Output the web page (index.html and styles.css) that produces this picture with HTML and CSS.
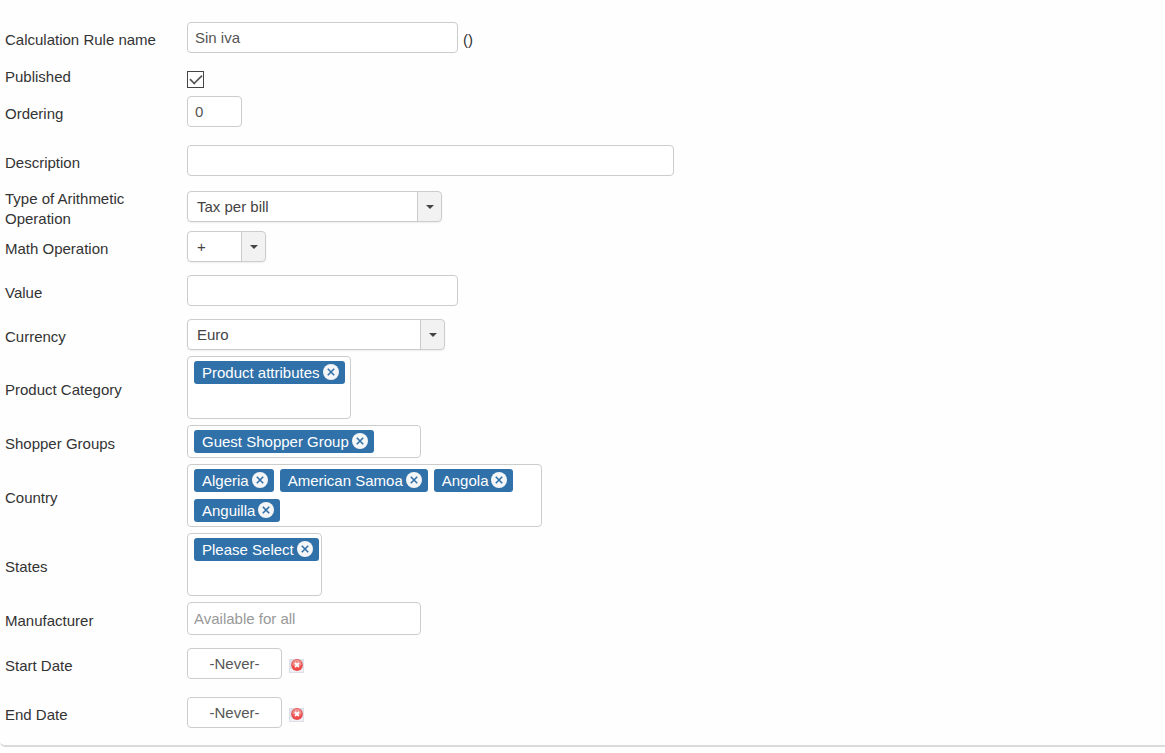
FILE: index.html
```html
<!DOCTYPE html>
<html lang="en">
<head>
<meta charset="utf-8">
<title>Calculation Rule</title>
<link rel="stylesheet" href="styles.css">
</head>
<body>
<svg class="defs" aria-hidden="true">
  <symbol id="remove" viewBox="0 0 16 16"><circle cx="8" cy="8" r="8" fill="#f4f5f7"/><path d="M4.8 4.8l6.4 6.4M11.2 4.8l-6.4 6.4" stroke="#3071a9" stroke-width="1.6"/></symbol>
  <symbol id="clear" viewBox="0 0 15 14">
    <path d="M0 0h15v14H0z" fill="#dfe0e8"/><path d="M1 10h13v3H1z" fill="#f0f0f4"/>
    <circle cx="8" cy="6" r="5.9" fill="#e25555"/><circle cx="8" cy="5.2" r="4.5" fill="#f29090"/><path d="M3.2 6.5a4.8 4.8 0 0 0 9.6 0z" fill="#f04a4a"/>
    <path d="M6 4l4 4M10 4l-4 4" stroke="#fff" stroke-width="1.8"/>
  </symbol>
</svg>
<form class="panel">
  <div class="row">
    <label class="label" for="name">Calculation Rule name</label>
    <div class="field"><input class="input medium" id="name" type="text" value="Sin iva"><span class="note">()</span></div>
  </div>
  <div class="row gap-lg check-row">
    <label class="label" for="published">Published</label>
    <div class="field"><input class="check" id="published" type="checkbox" checked></div>
  </div>
  <div class="row">
    <label class="label" for="ordering">Ordering</label>
    <div class="field"><input class="input tiny" id="ordering" type="text" value="0"></div>
  </div>
  <div class="row gap-lg">
    <label class="label" for="description">Description</label>
    <div class="field"><input class="input large" id="description" type="text"></div>
  </div>
  <div class="row gap-md tall">
    <label class="label" for="kind">Type of Arithmetic Operation</label>
    <div class="field"><span class="select kind"><select id="kind"><option>Tax per bill</option></select></span></div>
  </div>
  <div class="row gap-xs">
    <label class="label" for="math">Math Operation</label>
    <div class="field"><span class="select math"><select id="math"><option>+</option></select></span></div>
  </div>
  <div class="row gap-md">
    <label class="label" for="value">Value</label>
    <div class="field"><input class="input medium" id="value" type="text"></div>
  </div>
  <div class="row gap-md">
    <label class="label" for="currency">Currency</label>
    <div class="field"><span class="select currency"><select id="currency"><option>Euro</option></select></span></div>
  </div>
  <div class="row gap-sm">
    <span class="label" id="l-category">Product Category</span>
    <div class="chips category" role="group" aria-labelledby="l-category">
      <span class="chip">Product attributes<button type="button" aria-label="Remove"><svg><use href="#remove"/></svg></button></span>
    </div>
  </div>
  <div class="row gap-sm">
    <span class="label" id="l-groups">Shopper Groups</span>
    <div class="chips single" role="group" aria-labelledby="l-groups">
      <span class="chip">Guest Shopper Group<button type="button" aria-label="Remove"><svg><use href="#remove"/></svg></button></span>
    </div>
  </div>
  <div class="row gap-sm">
    <span class="label" id="l-country">Country</span>
    <div class="chips country" role="group" aria-labelledby="l-country">
      <span class="chip">Algeria<button type="button" aria-label="Remove"><svg><use href="#remove"/></svg></button></span>
      <span class="chip">American Samoa<button type="button" aria-label="Remove"><svg><use href="#remove"/></svg></button></span>
      <span class="chip">Angola<button type="button" aria-label="Remove"><svg><use href="#remove"/></svg></button></span>
      <span class="chip">Anguilla<button type="button" aria-label="Remove"><svg><use href="#remove"/></svg></button></span>
    </div>
  </div>
  <div class="row gap-sm">
    <span class="label" id="l-states">States</span>
    <div class="chips states" role="group" aria-labelledby="l-states">
      <span class="chip">Please Select<button type="button" aria-label="Remove"><svg><use href="#remove"/></svg></button></span>
    </div>
  </div>
  <div class="row gap-sm">
    <label class="label" for="manufacturer">Manufacturer</label>
    <div class="field"><input class="input maker" id="manufacturer" type="text" placeholder="Available for all"></div>
  </div>
  <div class="row gap-md">
    <label class="label" for="start">Start Date</label>
    <div class="field"><input class="input date" id="start" type="text" value="-Never-"><button class="clear" type="button" aria-label="Clear start date"><svg><use href="#clear"/></svg></button></div>
  </div>
  <div class="row gap-lg">
    <label class="label" for="end">End Date</label>
    <div class="field"><input class="input date" id="end" type="text" value="-Never-"><button class="clear" type="button" aria-label="Clear end date"><svg><use href="#clear"/></svg></button></div>
  </div>
</form>
</body>
</html>
```
FILE: styles.css
```css
* { box-sizing: border-box; }
body {
  margin: 0;
  background: #fefefe;
  color: #333;
  font: 15px/20px "Liberation Sans", Arial, sans-serif;
}
input, select, button { font: inherit; margin: 0; }
button { padding: 0; border: 0; background: none; display: flex; }
.defs { display: none; }

.panel {
  padding: 22px 5px 17px;
  border-bottom: 2px solid #dadada;
  border-bottom-left-radius: 5px;
}
.row {
  display: grid;
  grid-template-columns: 160px 1fr;
  column-gap: 22px;
  align-items: center;
}
.label { padding-top: 4px; }
.gap-xs { margin-top: 2px; }
.gap-sm { margin-top: 6px; }
.gap-md { margin-top: 13px; }
.gap-lg { margin-top: 18px; }
.check-row { height: 17px; margin-bottom: 8px; }
.check-row .label { padding: 0; margin-top: -5px; }
.tall { align-items: start; }
.tall .label { padding: 0; }
.tall .field { padding-top: 2px; height: 40px; align-items: flex-start; }
.field { display: flex; align-items: center; }

.input {
  height: 31px;
  padding: 0 7px;
  border: 1px solid #ccc;
  border-radius: 4px;
  background: #fff;
  color: #555;
}
.medium { width: 271px; }
.tiny { width: 55px; }
.large { width: 487px; }
.maker { width: 234px; height: 33px; padding: 0 6px; }
.maker::placeholder { color: #999; }
.date { width: 95px; text-align: center; }
.note { padding: 4px 0 0 5px; }
.clear { margin: 4px 0 0 7px; }
.clear svg { width: 15px; height: 14px; }

.check {
  appearance: none;
  display: grid;
  place-items: center;
  width: 17px;
  height: 17px;
  border: 1px solid #444;
  background: #fff;
}
.check:checked::after {
  content: "";
  width: 12px;
  height: 6px;
  margin-top: -4px;
  border: solid #555;
  border-width: 0 0 2px 2px;
  transform: rotate(-45deg) scale(.85);
}

.select {
  position: relative;
  display: block;
  border: 1px solid #ccc;
  border-radius: 4px;
  background: linear-gradient(to left, #f2f2f2 23px, #ccc 23px, #ccc 24px, #fff 24px);
  box-shadow: 0 1px 2px rgba(0, 0, 0, .07);
}
.select select {
  appearance: none;
  display: block;
  width: 100%;
  height: 29px;
  padding: 1px 28px 0 9px;
  border: 0;
  background: none;
  color: #444;
}
.select::after {
  content: "";
  position: absolute;
  top: 13px;
  right: 7px;
  border: 4px solid transparent;
  border-top-color: #444;
  pointer-events: none;
}
.kind { width: 255px; }
.math { width: 79px; }
.currency { width: 258px; }

.chips {
  display: flex;
  flex-wrap: wrap;
  align-content: flex-start;
  gap: 7px 6px;
  padding: 4px 3px 4px 6px;
  border: 1px solid #ccc;
  border-radius: 4px;
  background: #fff;
}
.chip {
  display: flex;
  align-items: center;
  gap: 3px;
  height: 23px;
  padding: 0 6px 0 8px;
  border-radius: 3px;
  background: #3071a9;
  color: #fff;
  line-height: 24px;
  white-space: nowrap;
}
.chip button { margin-bottom: 2px; }
.chip svg { width: 16px; height: 16px; }
.category { width: 164px; min-height: 63px; }
.single { width: 234px; min-height: 33px; }
.country { width: 355px; min-height: 63px; }
.states { width: 135px; min-height: 63px; }
```
